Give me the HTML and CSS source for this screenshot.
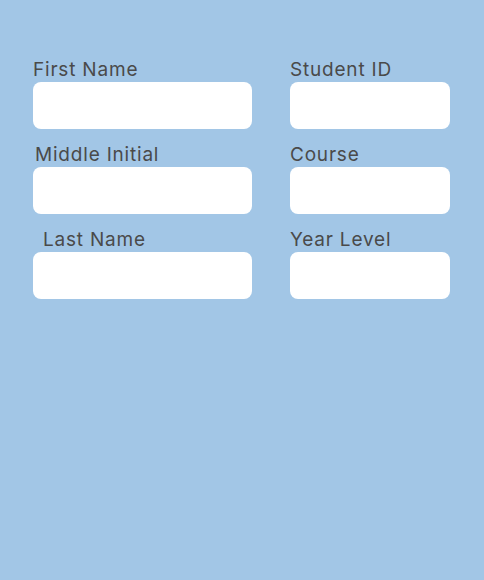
FILE: index.html
```html
<!DOCTYPE html>
<html>
<head>
<meta charset="utf-8">
<link rel="stylesheet" href="styles.css">
</head>
<body>
<form class="form">
  <div class="col col-left">
    <div class="field"><label class="label">First Name</label><div class="box"></div></div>
    <div class="field"><label class="label label-mid">Middle Initial</label><div class="box"></div></div>
    <div class="field"><label class="label label-last">Last Name</label><div class="box"></div></div>
  </div>
  <div class="col col-right">
    <div class="field"><label class="label">Student ID</label><div class="box"></div></div>
    <div class="field"><label class="label">Course</label><div class="box"></div></div>
    <div class="field"><label class="label">Year Level</label><div class="box"></div></div>
  </div>
</form>
</body>
</html>
```
FILE: styles.css
```css
html, body {
  margin: 0;
  height: 100%;
}
body {
  background: #a2c6e6;
  font-family: "Inter", "Noto Sans", sans-serif;
  color: #4a4a4a;
}
.form {
  display: flex;
  padding: 58px 0 0 33px;
  gap: 38px;
}
.col {
  display: flex;
  flex-direction: column;
  gap: 14px;
}
.col-left { width: 219px; }
.col-right { width: 160px; }
.field {
  display: flex;
  flex-direction: column;
}
.label {
  display: block;
  font-size: 19px;
  line-height: 24px;
  height: 24px;
  letter-spacing: 0.8px;
}
.label-mid { padding-left: 2px; }
.label-last { padding-left: 10px; }
.box {
  height: 47px;
  background: #ffffff;
  border-radius: 8px;
}
```
